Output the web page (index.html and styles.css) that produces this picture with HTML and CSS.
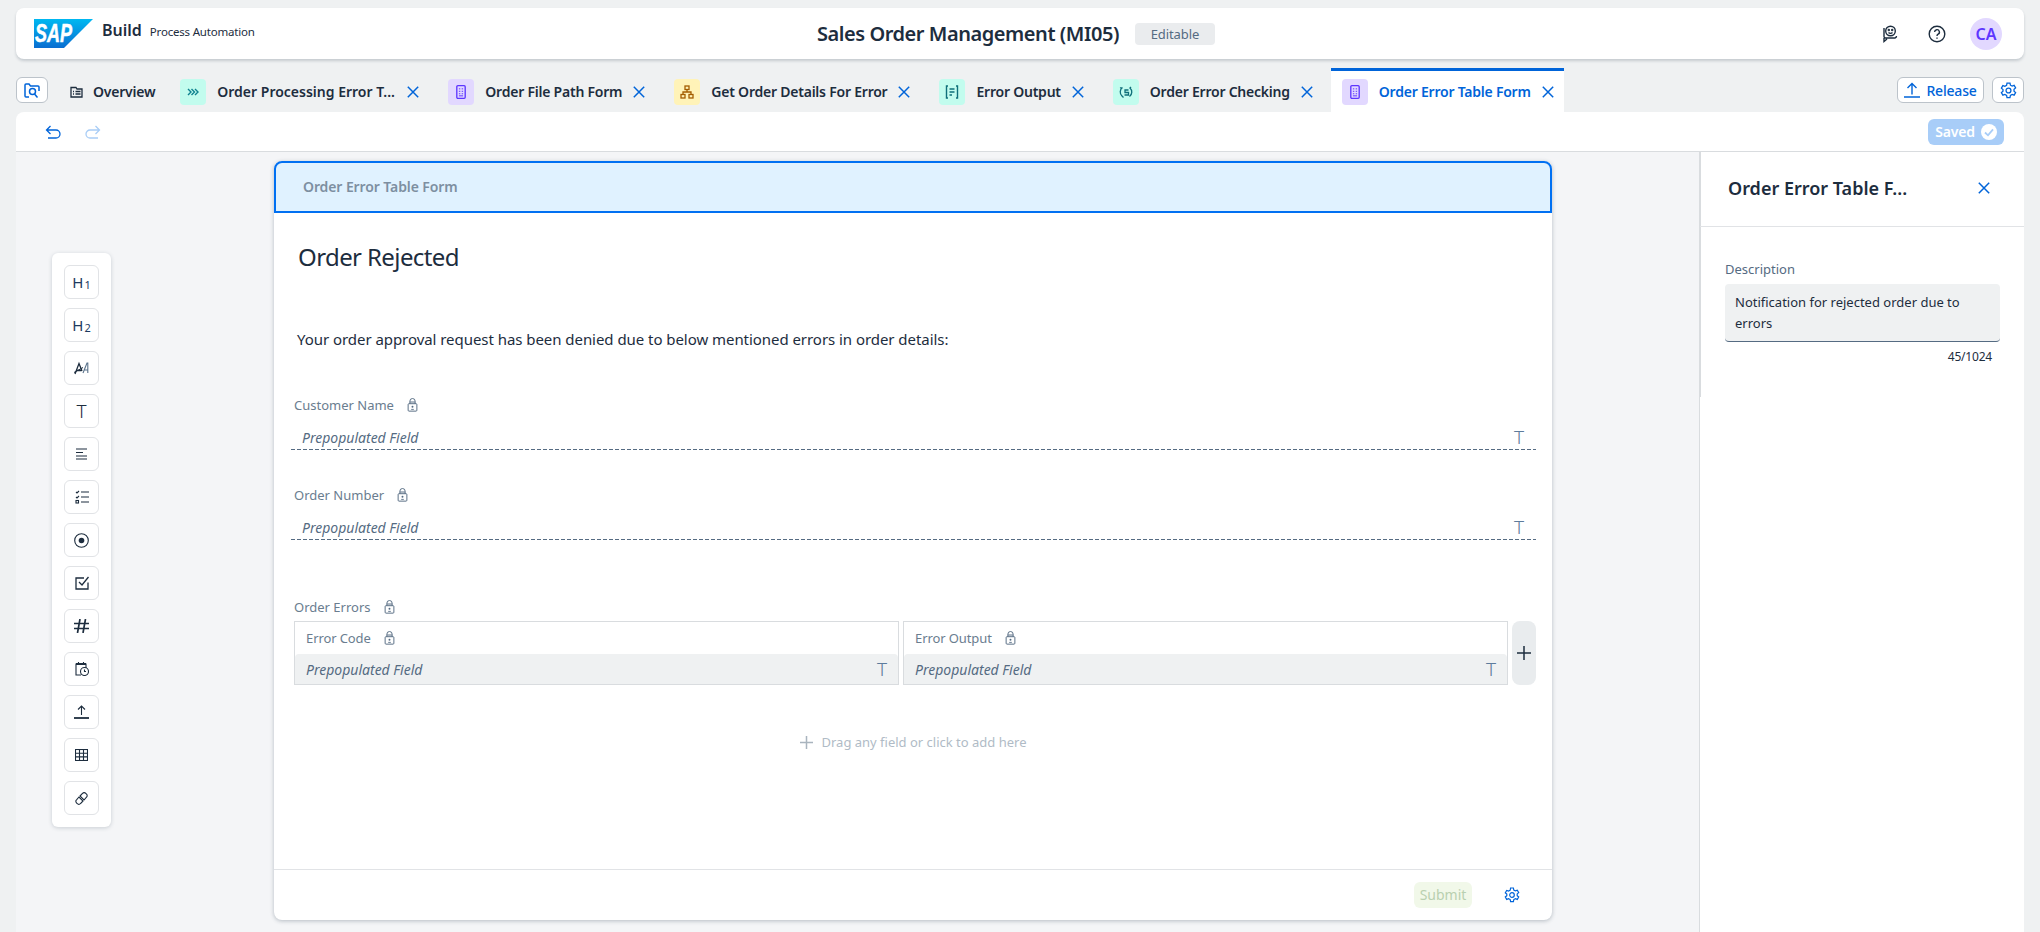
FILE: index.html
```html
<!DOCTYPE html>
<html lang="en">
<head>
    <meta charset="UTF-8">
    <meta name="viewport" content="width=device-width, initial-scale=1.0">
    <title>Sales Order Management (MI05)</title>
    <link rel="stylesheet" href="styles.css">
</head>
<body>
    <svg class="sprites" width="0" height="0">
        <symbol id="x" viewBox="0 0 12 12"><path d="M.8.8l10.400 10.400M11.200.8L.8 11.200" fill="none" stroke="currentColor" stroke-width="1.500"/></symbol>
        <symbol id="lock" viewBox="0 0 12 16"><g fill="none" stroke="currentColor" stroke-width="1.100"><rect x="1" y="6.500" width="10" height="8.500" rx="1"/><path d="M3 6.500V3.600a3 3 0 0 1 6 0v2.900"/><path d="M3 4.600h6"/></g><circle cx="6" cy="10" r="1.100" fill="currentColor"/><path d="M4.500 13h3" stroke="currentColor"/></symbol>
        <symbol id="form" viewBox="0 0 14 20"><rect x="1" y="1" width="12" height="18" rx="1.500" fill="none" stroke="currentColor" stroke-width="1.900"/><path d="M4 5.500h2M8 5.500h2M4 9h2M8 9h2M4 12.500h2M8 12.500h2M4 15.500h6" stroke="currentColor" stroke-width="1.400"/></symbol>
        <symbol id="gear" viewBox="0 0 16 16"><g fill="none" stroke="currentColor" stroke-width="1.200"><path d="M6.600 1h2.800l.4 2 1.600.9 1.900-.7 1.400 2.400-1.500 1.300v1.800l1.500 1.300-1.400 2.400-1.900-.7-1.600.9-.4 2H6.600l-.4-2-1.600-.9-1.900.7-1.400-2.400 1.500-1.300V7.100L1.300 5.800l1.400-2.400 1.900.7 1.600-.9z"/><circle cx="8" cy="8" r="2.300"/></g></symbol>
    </svg>

    <header class="shell">
        <div class="brand">
            <svg class="sap-logo" width="59" height="29" viewBox="0 0 59 29">
                <defs><linearGradient id="sapBlue" x1="0" y1="0" x2="0" y2="1"><stop offset="0" stop-color="#00b8f1"/><stop offset="1" stop-color="#0a6ed1"/></linearGradient></defs>
                <path d="M0 0h59L30 29H0z" fill="url(#sapBlue)"/>
                <text x="1" y="23" class="sap-text" textLength="37" lengthAdjust="spacingAndGlyphs">SAP</text>
            </svg>
            <span class="brand-name">Build</span>
            <span class="brand-sub">Process Automation</span>
        </div>
        <div class="project">
            <span class="project-title">Sales Order Management (MI05)</span>
            <span class="project-state">Editable</span>
        </div>
        <div class="shell-actions">
            <svg width="18" height="18" viewBox="0 0 18 18" fill="none" stroke="#1d2d3e" stroke-width="1.400"><circle cx="10.500" cy="6" r="4.800"/><path d="M4 3v8.500a1.500 1.500 0 0 0 1.500 1.500h9.500a2 2 0 0 0 1.500-2M4 13v3.500L7 14"/><circle cx="8.800" cy="5" r=".5"/><circle cx="12.200" cy="5" r=".5"/><path d="M8.500 7.500c1 1 3 1 4 0"/></svg>
            <svg width="18" height="18" viewBox="0 0 18 18" fill="none" stroke="#1d2d3e" stroke-width="1.400"><circle cx="9" cy="9" r="7.800"/><path d="M6.600 7a2.400 2.400 0 1 1 3.500 2.200c-.8.400-1.100.9-1.100 1.800"/><path d="M9 12.500v1.300"/></svg>
            <span class="avatar">CA</span>
        </div>
    </header>

    <nav class="tabbar">
        <button class="search-btn">
            <svg width="16" height="17" viewBox="0 0 16 17" fill="none" stroke="#0064d9" stroke-width="1.500"><path d="M5 15H2a1 1 0 0 1-1-1V3a1 1 0 0 1 1-1h3l1.500 2H14a1 1 0 0 1 1 1v4"/><circle cx="8.500" cy="9.500" r="3"/><path d="M10.500 12l3 3.500"/></svg>
        </button>
        <div class="tab tab-plain">
            <svg width="13" height="12" viewBox="0 0 13 12" fill="none" stroke="#1d2d3e" stroke-width="1.300"><path d="M1 3V1.500h5L7 3h5v8H1z"/><path d="M3 5.500h1M5.500 5.500h5M3 8h1M5.500 8h5"/></svg>
            <span>Overview</span>
        </div>
        <div class="tab">
            <span class="tab-icon teal"><svg width="12" height="8" viewBox="0 0 12 8" fill="none" stroke="#0f828f" stroke-width="1.400"><path d="M1 1l3 3-3 3M4.500 1l3 3-3 3M8 1l3 3-3 3"/></svg></span>
            <span class="tab-long">Order Processing Error T...</span>
            <svg class="tab-x"><use href="#x"/></svg>
        </div>
        <div class="tab">
            <span class="tab-icon purple"><svg width="10" height="14"><use href="#form"/></svg></span>
            <span>Order File Path Form</span>
            <svg class="tab-x"><use href="#x"/></svg>
        </div>
        <div class="tab">
            <span class="tab-icon yellow"><svg width="14" height="14" viewBox="0 0 14 14" fill="none" stroke="#a45d00" stroke-width="1.300"><rect x="5" y="1" width="4" height="3.500"/><rect x="1" y="9.500" width="4" height="3.500"/><rect x="9" y="9.500" width="4" height="3.500"/><path d="M7 4.500v2.500M3 9.500V7h8v2.500"/></svg></span>
            <span>Get Order Details For Error</span>
            <svg class="tab-x"><use href="#x"/></svg>
        </div>
        <div class="tab">
            <span class="tab-icon teal"><svg width="14" height="14" viewBox="0 0 14 14" fill="none" stroke="#0f6f7a" stroke-width="1.400"><path d="M3 1H1.500v12H3M11 1h1.500v12H11M4.500 4h5M4.500 7h5M4.500 10h2.500"/></svg></span>
            <span>Error Output</span>
            <svg class="tab-x"><use href="#x"/></svg>
        </div>
        <div class="tab">
            <span class="tab-icon teal"><svg width="14" height="14" viewBox="0 0 14 14" fill="none" stroke="#0f6f7a" stroke-width="1.300"><path d="M3.500 2.500A5.500 5.500 0 0 0 3 11l1.500 1.500M1 3l1.500-.5M10.500 11.500A5.500 5.500 0 0 0 11 3l1-1"/><path d="M9.500 5H6v2.500h3.500V10H5.500"/></svg></span>
            <span>Order Error Checking</span>
            <svg class="tab-x"><use href="#x"/></svg>
        </div>
        <div class="tab tab-active">
            <span class="tab-icon purple"><svg width="10" height="14"><use href="#form"/></svg></span>
            <span>Order Error Table Form</span>
            <svg class="tab-x"><use href="#x"/></svg>
        </div>
        <div class="tab-tools">
            <button class="release-btn">
                <svg width="16" height="16" viewBox="0 0 16 16" fill="none" stroke="#0064d9" stroke-width="1.400"><path d="M8 12.500V1.500M3.500 6l4.500-4.500L12.500 6M0 15h16"/></svg>
                Release
            </button>
            <button class="settings-btn"><svg width="17" height="17" class="blue"><use href="#gear"/></svg></button>
        </div>
    </nav>

    <div class="toolbar">
        <svg width="16" height="14" viewBox="0 0 16 14" fill="none" stroke="#0064d9" stroke-width="1.300"><path d="M5.500 1L1.500 5l4 4M1.500 5H11a3.800 3.800 0 0 1 0 8H3"/></svg>
        <svg width="16" height="14" viewBox="0 0 16 14" fill="none" stroke="#a9cdf6" stroke-width="1.300"><path d="M10.500 1l4 4-4 4M14.500 5H5a3.800 3.800 0 0 0 0 8h8"/></svg>
        <span class="saved">Saved
            <svg width="16" height="16" viewBox="0 0 16 16"><circle cx="8" cy="8" r="8" fill="#fff"/><path d="M4 8.500l3 2.800 5-6" fill="none" stroke="#a8cdf8" stroke-width="1.800"/></svg>
        </span>
    </div>

    <main class="workspace">
        <section class="canvas">
            <aside class="palette">
                <button class="tool"><span class="tool-h">H<sub>1</sub></span></button>
                <button class="tool"><span class="tool-h">H<sub>2</sub></span></button>
                <button class="tool"><svg width="16" height="14" viewBox="0 0 16 14" fill="none" stroke="#1d2d3e" stroke-width="1.300"><path d="M1 13L5 2.500 8 10M2.500 9.500h5"/><path d="M9 12l4-10h.8V12M10 9h4" stroke="#5b738b" stroke-width="1.100"/><path d="M0 11.500l9-5" stroke-width="1"/></svg></button>
                <button class="tool"><span class="tool-t">T</span></button>
                <button class="tool"><svg width="13" height="12" viewBox="0 0 13 12" stroke="#1d2d3e" stroke-width="1.100"><path d="M1 1h11M1 4.500h7M1 8h11M1 11h11"/></svg></button>
                <button class="tool"><svg width="14" height="14" viewBox="0 0 14 14" fill="none" stroke="#1d2d3e" stroke-width="1.100"><path d="M6 2h8M6 7h8M6 12h8"/><path d="M1 2l1 1 2-2M1 7l1 1 2-2"/><rect x="1" y="10.500" width="2.500" height="2.500"/></svg></button>
                <button class="tool"><svg width="15" height="15" viewBox="0 0 15 15"><circle cx="7.500" cy="7.500" r="6.800" fill="none" stroke="#1d2d3e" stroke-width="1.100"/><circle cx="7.500" cy="7.500" r="2.800" fill="#1d2d3e"/></svg></button>
                <button class="tool"><svg width="14" height="14" viewBox="0 0 14 14" fill="none" stroke="#1d2d3e" stroke-width="1.300"><path d="M13 6.500V13H1V2h8"/><path d="M4 6l3 3 6.500-8"/></svg></button>
                <button class="tool"><svg width="15" height="14" viewBox="0 0 15 14" stroke="#1d2d3e" stroke-width="1.700"><path d="M6 0L3.500 14M11.500 0L9 14M0 4.500h15M0 9.500h15"/></svg></button>
                <button class="tool"><svg width="14" height="14" viewBox="0 0 14 14" fill="none" stroke="#1d2d3e" stroke-width="1.100"><path d="M6 13H1V2h10v4M3.500 0v3M8.500 0v3"/><path d="M1 2h10" stroke-width="2"/><circle cx="9.500" cy="9.500" r="4"/><path d="M9.500 7.500v2h1.500"/></svg></button>
                <button class="tool"><svg width="15" height="14" viewBox="0 0 15 14" fill="none" stroke="#1d2d3e"><path d="M7.500 10V1M4 4.500L7.500 1 11 4.500" stroke-width="1.100"/><path d="M0 13h15" stroke-width="1.800"/></svg></button>
                <button class="tool"><svg width="13" height="12" viewBox="0 0 13 12" fill="none" stroke="#1d2d3e" stroke-width="1.100"><rect x=".5" y=".5" width="12" height="11"/><path d="M.5 4.200h12M.5 7.900h12M4.500.5v11M8.500.5v11"/></svg></button>
                <button class="tool"><svg width="13" height="13" viewBox="0 0 13 13" fill="none" stroke="#1d2d3e" stroke-width="1.100"><path d="M5.500 3.500l2-2a2 2 0 0 1 3.300 0l.7.700a2 2 0 0 1 0 3L9 8 5 4z"/><path d="M7.500 9.500l-2 2a2 2 0 0 1-3.300 0l-.7-.7a2 2 0 0 1 0-3L4 5l4 4z"/></svg></button>
            </aside>

            <article class="form-card">
                <div class="form-head">Order Error Table Form</div>
                <div class="form-body">
                    <h1 class="form-title">Order Rejected</h1>
                    <p class="form-text">Your order approval request has been denied due to below mentioned errors in order details:</p>

                    <div class="field">
                        <div class="field-label">Customer Name <svg class="lock"><use href="#lock"/></svg></div>
                        <div class="field-input"><i>Prepopulated Field</i><span class="type-t">T</span></div>
                    </div>
                    <div class="field field-2">
                        <div class="field-label">Order Number <svg class="lock"><use href="#lock"/></svg></div>
                        <div class="field-input"><i>Prepopulated Field</i><span class="type-t">T</span></div>
                    </div>

                    <div class="table-field">
                        <div class="field-label">Order Errors <svg class="lock"><use href="#lock"/></svg></div>
                        <div class="table-row">
                            <div class="col">
                                <div class="col-head">Error Code <svg class="lock"><use href="#lock"/></svg></div>
                                <div class="col-cell"><i>Prepopulated Field</i><span class="type-t">T</span></div>
                            </div>
                            <div class="col">
                                <div class="col-head">Error Output <svg class="lock"><use href="#lock"/></svg></div>
                                <div class="col-cell"><i>Prepopulated Field</i><span class="type-t">T</span></div>
                            </div>
                            <button class="add-col"><svg width="14" height="14" viewBox="0 0 14 14" stroke="#1d2d3e" stroke-width="1.500"><path d="M7 0v14M0 7h14"/></svg></button>
                        </div>
                    </div>

                    <div class="drop-hint">
                        <svg width="13" height="13" viewBox="0 0 13 13" stroke="#a9b4be" stroke-width="1.500"><path d="M6.500 0v13M0 6.500h13"/></svg>
                        Drag any field or click to add here
                    </div>
                </div>
                <footer class="form-foot">
                    <span class="submit">Submit</span>
                    <svg width="16" height="16" class="blue"><use href="#gear"/></svg>
                </footer>
            </article>
        </section>

        <aside class="panel">
            <div class="panel-head">
                <span class="panel-title">Order Error Table F...</span>
                <svg class="panel-x"><use href="#x"/></svg>
            </div>
            <div class="panel-body">
                <label class="panel-label">Description</label>
                <div class="panel-text">Notification for rejected order due to errors</div>
                <div class="panel-count">45/1024</div>
            </div>
        </aside>
    </main>
</body>
</html>
```

FILE: styles.css
```css
* {
    box-sizing: border-box;
}
html, body {
    height: 100%;
}
body {
    margin: 0;
    padding: 8px 16px 0;
    height: 932px;
    overflow: hidden;
    display: flex;
    flex-direction: column;
    background-color: #eff1f2;
    color: #1d2d3e;
    font-family: "Noto Sans", "Open Sans", sans-serif;
    font-size: 14px;
}
button {
    font-family: inherit;
    padding: 0;
    cursor: pointer;
}
.sprites {
    display: block;
    height: 0;
}
.blue {
    color: #0064d9;
}

/* shell bar */
.shell {
    height: 51px;
    flex: none;
    display: flex;
    align-items: center;
    padding: 0 18px;
    background-color: #fff;
    border-radius: 8px;
    box-shadow: 0 2px 3px rgba(34, 54, 73, 0.2);
}
.brand {
    display: flex;
    align-items: baseline;
    width: 783px;
    flex: none;
}
.sap-logo {
    align-self: center;
    margin-right: 9px;
}
.sap-text {
    font-family: "Liberation Sans", sans-serif;
    font-weight: 700;
    font-style: italic;
    font-size: 25px;
    fill: #fff;
    stroke: #fff;
    stroke-width: 0.5px;
}
.brand-name {
    font-size: 16px;
    font-weight: 600;
    margin-right: 8px;
}
.brand-sub {
    font-size: 11.5px;
    letter-spacing: -0.2px;
}
.project {
    display: flex;
    align-items: center;
    gap: 16px;
}
.project-title {
    font-size: 20px;
    font-weight: 600;
    letter-spacing: -0.45px;
}
.project-state {
    width: 80px;
    height: 22px;
    line-height: 22px;
    text-align: center;
    font-size: 13px;
    letter-spacing: -0.1px;
    color: #556b82;
    background-color: #eaecee;
    border-radius: 4px;
}
.shell-actions {
    margin-left: auto;
    margin-right: 4px;
    display: flex;
    align-items: center;
    gap: 30px;
}
.avatar {
    width: 32px;
    height: 32px;
    margin-left: -6px;
    border-radius: 50%;
    display: flex;
    align-items: center;
    justify-content: center;
    font-size: 16px;
    font-weight: 600;
    color: #5d36ff;
    background-color: #e2d8ff;
}

/* tabs */
.tabbar {
    height: 44px;
    margin-top: 9px;
    flex: none;
    display: flex;
    align-items: stretch;
}
.search-btn {
    align-self: center;
    width: 32px;
    height: 26px;
    margin-right: 17px;
    display: flex;
    align-items: center;
    justify-content: center;
    background-color: #fff;
    border: 1px solid #bcc3ca;
    border-radius: 6px;
}
.tab {
    display: flex;
    align-items: center;
    gap: 11px;
    padding: 3px 11px 0;
    margin-right: 7px;
    font-weight: 600;
    font-size: 14px;
    letter-spacing: -0.225px;
    white-space: nowrap;
}
.tab-plain {
    padding-left: 5px;
    margin-right: 3px;
    gap: 10px;
}
.tab-long {
    width: 179px;
    letter-spacing: 0;
}
.tab-icon {
    width: 26px;
    height: 26px;
    border-radius: 4px;
    display: flex;
    align-items: center;
    justify-content: center;
}
.teal {
    background-color: #c2fcee;
}
.purple {
    background-color: #e2d8ff;
    color: #5d36ff;
}
.yellow {
    background-color: #fff3b8;
}
.tab-x {
    width: 12px;
    height: 12px;
    flex: none;
    color: #0064d9;
}
.tab-active {
    margin-right: 0;
    padding-right: 10px;
    color: #0064d9;
    background-color: #fff;
    border-top: 3px solid #0064d9;
    padding-top: 0;
}
.tab-tools {
    margin-left: auto;
    display: flex;
    align-items: center;
    gap: 8px;
}
.release-btn {
    width: 87px;
    height: 26px;
    display: flex;
    align-items: center;
    justify-content: center;
    gap: 6px;
    color: #0064d9;
    font-size: 14px;
    font-weight: 500;
    letter-spacing: -0.2px;
    background-color: #fff;
    border: 1px solid #bcc3ca;
    border-radius: 6px;
}
.settings-btn {
    width: 32px;
    height: 26px;
    display: flex;
    align-items: center;
    justify-content: center;
    background-color: #fff;
    border: 1px solid #bcc3ca;
    border-radius: 6px;
}
.toolbar {
    height: 40px;
    flex: none;
    display: flex;
    align-items: center;
    gap: 24px;
    padding: 0 20px 0 29px;
    background-color: #fff;
    border-bottom: 1px solid #d9dcdf;
    border-radius: 8px 8px 0 0;
}
.saved {
    margin-left: auto;
    width: 76px;
    height: 26px;
    display: flex;
    align-items: center;
    justify-content: center;
    gap: 6px;
    color: #fff;
    font-size: 14px;
    font-weight: 600;
    letter-spacing: -0.2px;
    background-color: #a8cdf8;
    border-radius: 6px;
}

/* workspace */
.workspace {
    flex: 1;
    min-height: 0;
    display: flex;
    background-color: #f4f5f7;
}
.canvas {
    flex: 1;
    min-width: 0;
    display: flex;
    align-items: flex-start;
    padding: 9px 0 0 36px;
}
.palette {
    width: 59px;
    margin-top: 92px;
    padding: 12px;
    flex: none;
    display: flex;
    flex-direction: column;
    gap: 9px;
    background-color: #fff;
    border-radius: 6px;
    box-shadow: 0 1px 4px rgba(34, 54, 73, 0.2);
}
.tool {
    width: 35px;
    height: 34px;
    display: flex;
    align-items: center;
    justify-content: center;
    background-color: #fff;
    border: 1px solid #e1e3e6;
    border-radius: 6px;
    color: #1d2d3e;
}
.tool-h {
    font-size: 15px;
    line-height: 1;
    color: #1d3a5f;
}
.tool-h sub {
    font-size: 11px;
    line-height: 0;
    vertical-align: -1px;
    margin-left: 1px;
}
.tool-t {
    font-size: 19px;
    font-weight: 300;
    line-height: 1;
}

/* form */
.form-card {
    width: 1278px;
    height: 759px;
    margin-left: 163px;
    flex: none;
    display: flex;
    flex-direction: column;
    background-color: #fff;
    border-radius: 8px;
    box-shadow: 0 1px 4px rgba(34, 54, 73, 0.3);
}
.form-head {
    height: 52px;
    flex: none;
    padding-left: 27px;
    line-height: 48px;
    font-size: 14px;
    font-weight: 600;
    letter-spacing: -0.1px;
    color: #7d8fa1;
    background-color: #e0f2ff;
    border: 2px solid #0070f2;
    border-radius: 8px 8px 0 0;
}
.form-body {
    flex: 1;
    min-height: 0;
    padding: 0 16px 0 17px;
}
.form-title {
    margin: 27px 0 0 7px;
    font-size: 24px;
    font-weight: 400;
    letter-spacing: -0.6px;
    line-height: 33px;
}
.form-text {
    margin: 55px 0 0 6px;
    font-size: 15px;
    letter-spacing: -0.05px;
    line-height: 22px;
}
.field {
    margin-top: 45px;
}
.field-2 {
    margin-top: 35px;
}
.field-label {
    padding-left: 3px;
    display: flex;
    align-items: center;
    gap: 13px;
    height: 20px;
    font-size: 13px;
    color: #6a7d8f;
}
.lock {
    width: 11px;
    height: 14px;
    color: #556b82;
}
.field-input {
    height: 33px;
    margin-top: 2px;
    padding: 7px 12px 0 11px;
    display: flex;
    align-items: center;
    justify-content: space-between;
    color: #556b82;
    background: linear-gradient(to right, #556b82 4px, transparent 4px) left bottom / 6px 1px repeat-x;
}
.type-t {
    font-size: 19px;
    font-weight: 300;
    color: #5d7b9c;
}
.table-field {
    margin-top: 57px;
}
.table-row {
    margin-top: 4px;
    display: flex;
    gap: 4px;
    padding-left: 3px;
}
.col {
    flex: 1;
    height: 64px;
    display: flex;
    flex-direction: column;
    border: 1px solid #d9dcdf;
}
.col-head {
    height: 32px;
    flex: none;
    padding-left: 11px;
    display: flex;
    align-items: center;
    gap: 13px;
    font-size: 13px;
    letter-spacing: -0.1px;
    color: #6a7d8f;
}
.col-cell {
    flex: 1;
    padding: 0 11px;
    display: flex;
    align-items: center;
    justify-content: space-between;
    color: #556b82;
    background-color: #eff1f2;
    border-radius: 4px 4px 0 0;
}
.add-col {
    width: 24px;
    height: 64px;
    flex: none;
    display: flex;
    align-items: center;
    justify-content: center;
    background-color: #e9ecee;
    border: 0;
    border-radius: 8px;
}
.drop-hint {
    margin-top: 47px;
    display: flex;
    align-items: center;
    justify-content: center;
    gap: 8px;
    height: 20px;
    font-size: 13px;
    color: #b0bbc6;
}
.form-foot {
    height: 51px;
    flex: none;
    display: flex;
    align-items: center;
    justify-content: flex-end;
    gap: 32px;
    padding-right: 32px;
    border-top: 1px solid #e1e3e6;
}
.submit {
    width: 58px;
    height: 26px;
    line-height: 26px;
    text-align: center;
    color: #b9d0b0;
    background-color: #f1f8e9;
    border-radius: 6px;
}

/* right panel */
.panel {
    width: 325px;
    flex: none;
    background: linear-gradient(#d9dcdf, #d9dcdf) left top / 1px 245px no-repeat #fff;
    border-left: 1px solid #d9dcdf;
}
.panel-head {
    height: 75px;
    display: flex;
    align-items: center;
    justify-content: space-between;
    padding: 0 34px 2px 28px;
    border-bottom: 1px solid #e1e3e6;
}
.panel-title {
    font-size: 18px;
    font-weight: 600;
}
.panel-x {
    width: 12px;
    height: 12px;
    color: #0064d9;
}
.panel-body {
    padding: 33px 24px 0 25px;
}
.panel-label {
    display: block;
    height: 24px;
    font-size: 13px;
    color: #556b82;
}
.panel-text {
    height: 58px;
    padding: 8px 10px 0;
    line-height: 21px;
    font-size: 13px;
    background-color: #eff1f2;
    border-bottom: 1px solid #556b82;
    border-radius: 4px;
}
.panel-count {
    margin-top: 6px;
    padding-right: 8px;
    text-align: right;
    font-size: 12px;
    letter-spacing: -0.2px;
}
```
